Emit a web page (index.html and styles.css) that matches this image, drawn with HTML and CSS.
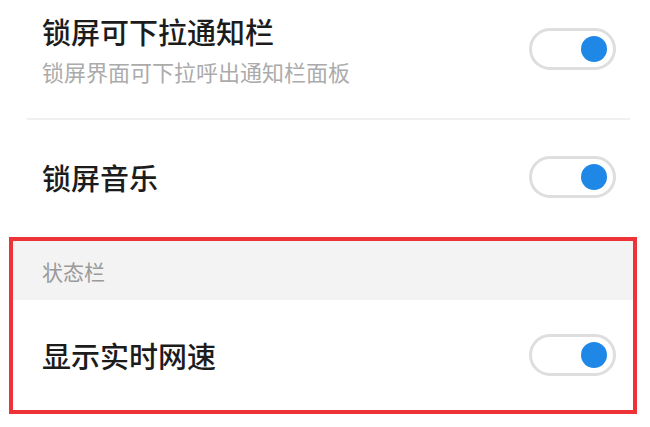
FILE: index.html
```html
<!DOCTYPE html>
<html lang="zh-CN">

<head>
    <meta charset="UTF-8">
    <meta name="viewport" content="width=device-width, initial-scale=1.0">
    <link rel="stylesheet" href="styles.css">
    <title>锁屏设置</title>
</head>

<body>

    <div class="settings-list">
        <div class="setting-row first-row">
            <div class="setting-text">
                <div class="setting-title">锁屏可下拉通知栏</div>
                <div class="setting-desc">锁屏界面可下拉呼出通知栏面板</div>
            </div>
            <div class="switch on"><span class="knob"></span></div>
        </div>

        <div class="divider"></div>

        <div class="setting-row music-row">
            <div class="setting-title">锁屏音乐</div>
            <div class="switch on"><span class="knob"></span></div>
        </div>

        <div class="highlight-box">
            <div class="group-header">状态栏</div>
            <div class="setting-row speed-row">
                <div class="setting-title">显示实时网速</div>
                <div class="switch on"><span class="knob"></span></div>
            </div>
        </div>
    </div>

</body>

</html>
```

FILE: styles.css
```css
body {
    margin: 0;
    background-color: #ffffff;
    font-family: 'Noto Sans CJK SC', 'Noto Sans', sans-serif;
}

.settings-list {
    width: 650px;
}

.setting-row {
    display: flex;
    justify-content: space-between;
    align-items: center;
    box-sizing: border-box;
    padding: 0 34px 0 42px;
}

.first-row {
    height: 118px;
    padding-bottom: 20px;
}

.music-row {
    height: 117px;
    padding-bottom: 3px;
}

.setting-title {
    font-size: 29px;
    font-weight: 500;
    line-height: 36px;
    color: #1c1c1c;
}

.setting-desc {
    margin-top: 8px;
    font-size: 22px;
    line-height: 28px;
    color: #ababab;
}

.divider {
    height: 2px;
    margin: 0 20px 0 27px;
    background-color: #f0f0f0;
}

.switch {
    display: flex;
    justify-content: flex-end;
    align-items: center;
    box-sizing: border-box;
    width: 87px;
    height: 42px;
    padding-right: 6px;
    border: 3px solid #dedede;
    border-radius: 21px;
    background-color: #ffffff;
}

.knob {
    width: 26px;
    height: 26px;
    border-radius: 50%;
    background-color: #1f87e6;
}

.highlight-box {
    width: 628px;
    box-sizing: border-box;
    margin-left: 9px;
    border: 4px solid #ee3338;
}

.group-header {
    height: 59px;
    padding-left: 29px;
    display: flex;
    align-items: center;
    background-color: #f3f3f3;
    font-size: 21px;
    color: #9a9a9a;
}

.speed-row {
    height: 110px;
    padding: 0 17px 0 29px;
}
```
